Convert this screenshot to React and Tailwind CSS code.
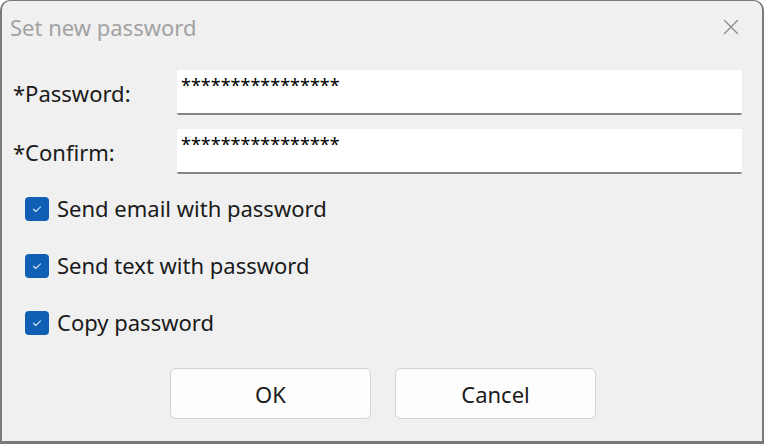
import { X } from "lucide-react";

function Check({ label }) {
  return (
    <label className="flex items-center gap-[8px] h-[24px]">
      <span className="w-[24px] h-[24px] rounded-[4px] bg-[#0f5fb4] flex items-center justify-center">
        <svg viewBox="0 0 16 16" className="w-[14px] h-[14px]" fill="none" stroke="#c8dcf0" strokeWidth="1.4" strokeLinecap="round" strokeLinejoin="round">
          <path d="M4 8.3l2.6 2.5L12 5.5" />
        </svg>
      </span>
      <span className="-mt-[2px]">{label}</span>
    </label>
  );
}

function Field({ label }) {
  return (
    <div className="flex items-center">
      <span className="w-[164px] pt-[1px]">{label}</span>
      <div className="flex-1 h-[45px] bg-white border-b-2 border-[#858585] rounded-[2px] px-[4px] pt-[3px] text-[18px] leading-[24px] text-black">
        ****************
      </div>
    </div>
  );
}

export default function App() {
  return (
    <div
      className="w-[764px] h-[444px] bg-[#f0f0f0] border-x-2 border-b-[3px] border-t border-[#7a7a7a] rounded-t-[10px] flex flex-col text-[22px] leading-[30px] text-[#1a1a1a]"
      style={{ fontFamily: '"Noto Sans", "Open Sans", sans-serif' }}
    >
      <div className="h-[54px] flex items-center justify-between pl-[8px] pr-[18px] pb-[3px]">
        <span className="text-[#a2a2a2]">Set new password</span>
        <X className="w-[26px] h-[26px] text-[#8a8a8a]" strokeWidth={1.2} />
      </div>
      <div className="flex flex-col gap-[14px] pl-[11px] pr-[20px] pt-[15px]">
        <Field label="*Password:" />
        <Field label="*Confirm:" />
      </div>
      <div className="flex flex-col gap-[33px] pl-[23px] pt-[23px]">
        <Check label="Send email with password" />
        <Check label="Send text with password" />
        <Check label="Copy password" />
      </div>
      <div className="flex justify-center gap-[24px] pt-[33px] pl-[2px]">
        <button className="w-[201px] h-[51px] bg-[#fdfdfd] border border-[#d3d3d3] rounded-[6px]">OK</button>
        <button className="w-[201px] h-[51px] bg-[#fdfdfd] border border-[#d3d3d3] rounded-[6px]">Cancel</button>
      </div>
    </div>
  );
}
